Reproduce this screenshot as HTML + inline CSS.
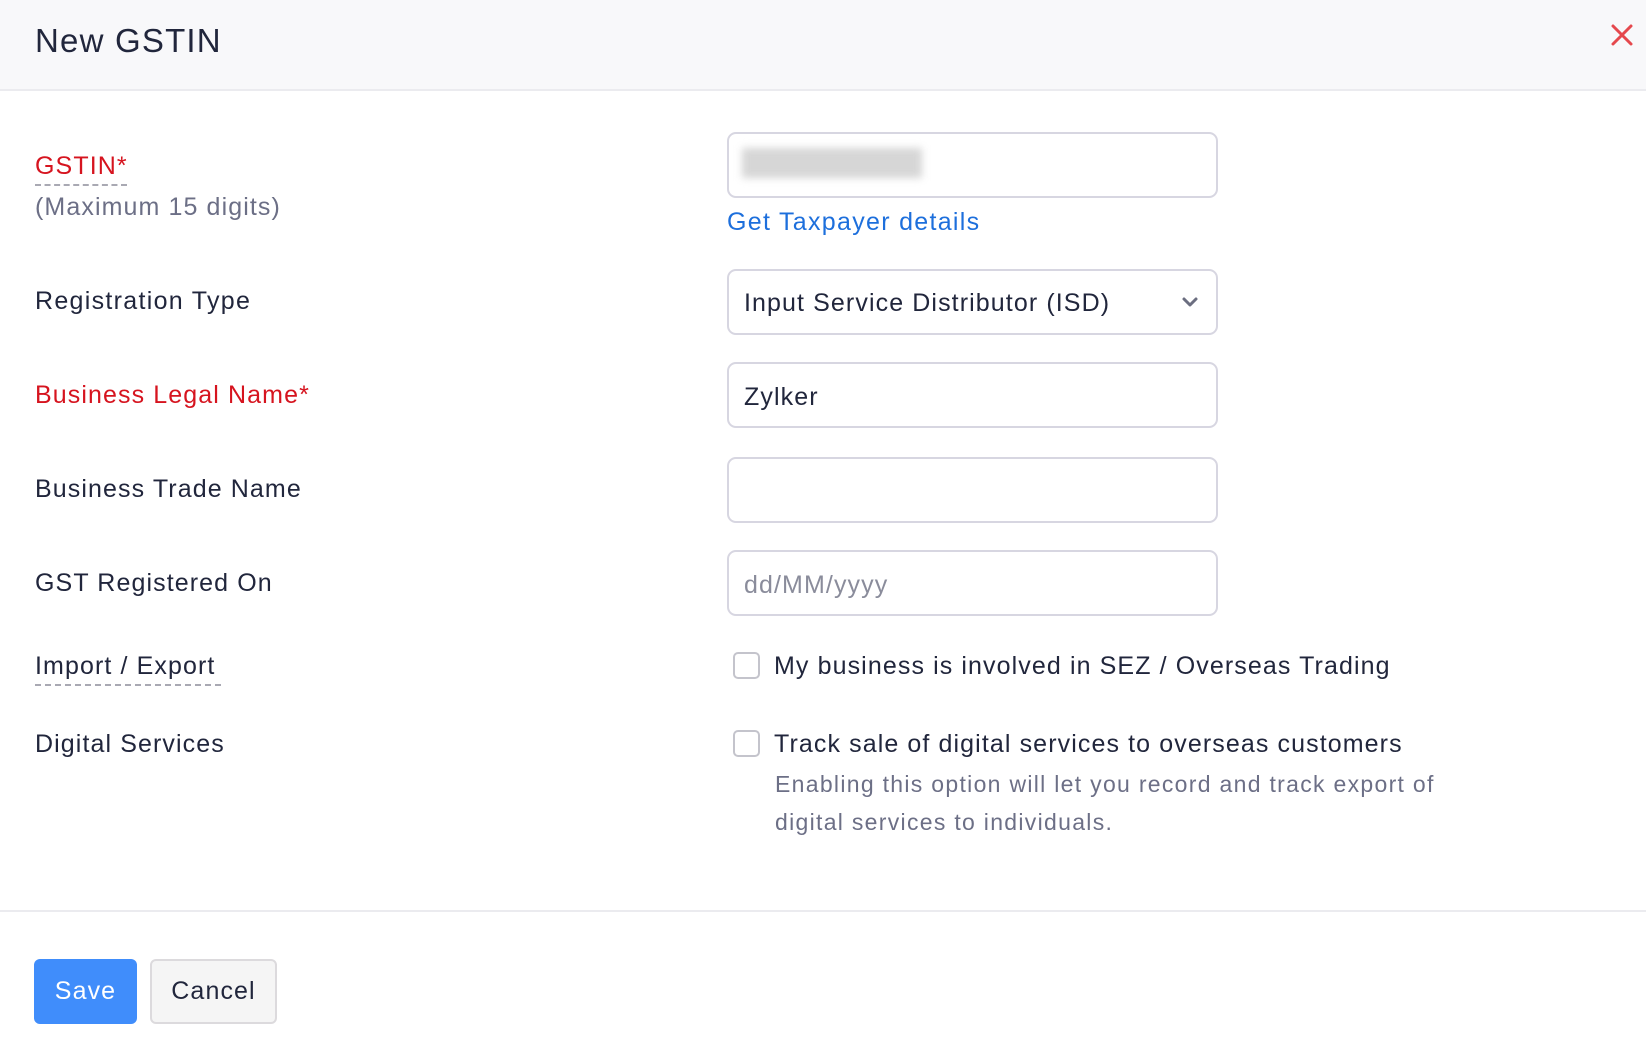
<!DOCTYPE html>
<html><head><meta charset="utf-8"><style>
*{box-sizing:border-box;margin:0;padding:0}
body{width:1646px;height:1056px;background:#fff;font-family:"Liberation Sans",sans-serif;color:#21263c;position:relative;overflow:hidden;letter-spacing:1.1px}
.hdr{position:absolute;left:0;top:0;width:1646px;height:91px;background:#f8f8fa;border-bottom:2px solid #ebebef}
.t{position:absolute;white-space:nowrap;line-height:1}
.inp{position:absolute;left:727px;width:491px;height:66px;border:2px solid #d7d6e1;border-radius:9px;background:#fff}
.lbl{font-size:25px;left:35px}
.cb{position:absolute;left:733px;width:27px;height:27px;border:2px solid #c4c4cc;border-radius:5px;background:#fff}
</style></head><body>
<div class="hdr"></div>
<div class="t" style="left:35px;top:24px;font-size:33px;color:#21263c;letter-spacing:1.2px">New GSTIN</div>
<svg style="position:absolute;left:1610px;top:23px" width="24" height="24" viewBox="0 0 24 24"><path d="M3 3L21 21M21 3L3 21" stroke="#e5484d" stroke-width="3" stroke-linecap="round"/></svg>

<div class="t lbl" style="top:154px;color:#d6141f">GSTIN*</div>
<div style="position:absolute;left:35px;top:184px;width:92px;border-top:2px dashed #a9a9b3"></div>
<div class="t lbl" style="top:195px;color:#6c6f86">(Maximum 15 digits)</div>
<div class="inp" style="top:132px"></div>
<div style="position:absolute;left:742px;top:148px;width:180px;height:30px;background:#d6d6d6;filter:blur(4px)"></div>
<div class="t" style="left:727px;top:210px;font-size:25px;color:#1d6fdc;letter-spacing:1.3px">Get Taxpayer details</div>

<div class="t lbl" style="top:289px;letter-spacing:1.3px">Registration Type</div>
<div class="inp" style="top:269px"></div>
<div class="t" style="left:744px;top:291px;font-size:25px">Input Service Distributor (ISD)</div>
<svg style="position:absolute;left:1181px;top:296px" width="18" height="12" viewBox="0 0 18 12"><path d="M3 3L9 9L15 3" stroke="#6b6e80" stroke-width="3" fill="none" stroke-linecap="round" stroke-linejoin="round"/></svg>

<div class="t lbl" style="top:383px;color:#d6141f">Business Legal Name*</div>
<div class="inp" style="top:362px"></div>
<div class="t" style="left:744px;top:385px;font-size:25px">Zylker</div>

<div class="t lbl" style="top:477px">Business Trade Name</div>
<div class="inp" style="top:457px"></div>

<div class="t lbl" style="top:571px">GST Registered On</div>
<div class="inp" style="top:550px"></div>
<div class="t" style="left:744px;top:573px;font-size:25px;color:#8a8c9b">dd/MM/yyyy</div>

<div class="t lbl" style="top:654px">Import / Export</div>
<div style="position:absolute;left:35px;top:684px;width:186px;border-top:2px dashed #a9a9b3"></div>
<div class="cb" style="top:652px"></div>
<div class="t" style="left:774px;top:654px;font-size:25px">My business is involved in SEZ / Overseas Trading</div>

<div class="t lbl" style="top:732px">Digital Services</div>
<div class="cb" style="top:730px"></div>
<div class="t" style="left:774px;top:732px;font-size:25px">Track sale of digital services to overseas customers</div>
<div class="t" style="left:775px;top:773px;font-size:23px;color:#6c6f86;letter-spacing:1.3px">Enabling this option will let you record and track export of</div>
<div class="t" style="left:775px;top:811px;font-size:23px;color:#6c6f86;letter-spacing:1.3px">digital services to individuals.</div>

<div style="position:absolute;left:0;top:910px;width:1646px;border-top:2px solid #ebebef"></div>
<div style="position:absolute;left:34px;top:959px;width:103px;height:65px;background:#408dfb;border-radius:6px;color:#fff;font-size:25px;line-height:65px;text-align:center">Save</div>
<div style="position:absolute;left:150px;top:959px;width:127px;height:65px;background:#f5f5f5;border:2px solid #dcdadd;border-radius:6px;color:#21263c;font-size:25px;line-height:61px;text-align:center">Cancel</div>
</body></html>
